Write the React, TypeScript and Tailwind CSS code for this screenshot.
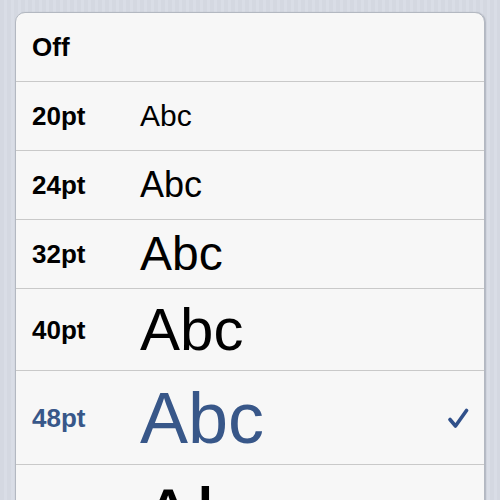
const rows = [
  { label: 'Off', size: 0, h: 'h-[68px]' },
  { label: '20pt', size: 30, h: 'h-[69px]' },
  { label: '24pt', size: 36, h: 'h-[69px]' },
  { label: '32pt', size: 48, h: 'h-[69px]' },
  { label: '40pt', size: 60, h: 'h-[82px]' },
  { label: '48pt', size: 72, h: 'h-[94px]', selected: true },
  { label: '56pt', size: 84, h: 'h-[106px]' },
];

function CheckMark() {
  return (
    <svg width="22" height="22" viewBox="0 0 22 22" className="mr-[1px]">
      <path
        d="M3 12.5 L8.5 19 L19.5 3.5"
        fill="none"
        stroke="#30508a"
        strokeWidth="3.6"
        strokeLinecap="round"
        strokeLinejoin="round"
      />
    </svg>
  );
}

export default function App() {
  return (
    <div className="h-[500px] w-[500px] overflow-hidden bg-[repeating-linear-gradient(90deg,#d4d8e1_0px,#d4d8e1_4px,#d9dde6_4px,#d9dde6_7px)] pt-[12px] font-['Liberation_Sans',Arial,sans-serif]">
      {/* settings group */}
      <div className="mx-[15px] rounded-t-[10px] border border-[#b3b8c1] bg-[#f7f7f7] shadow-[1px_0_1px_rgba(120,126,140,0.35)]">
        {rows.map((row, i) => (
          <div
            key={row.label}
            className={`flex items-center pl-[16px] pr-[14px] ${row.h} ${i > 0 ? 'border-t border-[#c9c9c9]' : ''} ${
              row.selected ? 'text-[#385789]' : 'text-black'
            }`}
          >
            <span className="w-[108px] shrink-0 text-[26px] font-bold leading-none">{row.label}</span>
            {row.size > 0 && (
              <span className="flex-1 leading-none" style={{ fontSize: row.size }}>
                Abc
              </span>
            )}
            {row.selected && <CheckMark />}
          </div>
        ))}
      </div>
    </div>
  );
}
